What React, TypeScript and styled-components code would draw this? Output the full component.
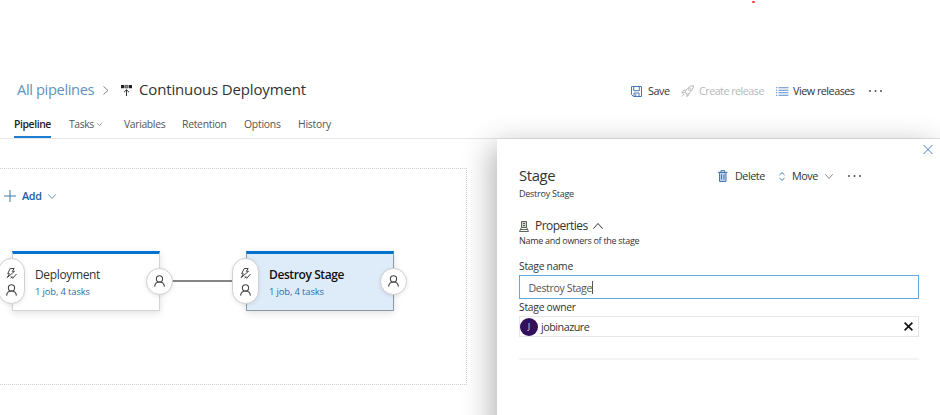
import React from "react";
import styled, { createGlobalStyle } from "styled-components";

const GlobalStyle = createGlobalStyle`
  * { box-sizing: border-box; }
  html, body { margin: 0; padding: 0; }
  body { background: #fff; overflow: hidden; font-family: "Open Sans", "Noto Sans", sans-serif; color: #333; }
`;

const Page = styled.div`
  position: relative;
  width: 940px;
  height: 415px;
  overflow: hidden;
  background: #fff;
`;

const RedMark = styled.i`
  position: absolute;
  left: 752px;
  top: 1px;
  width: 3px;
  height: 2px;
  border-radius: 1px;
  background: #ef4444;
`;

const Header = styled.header`
  display: flex;
  align-items: center;
  height: 30px;
  margin-top: 75px;
  padding-left: 17px;
`;

const Label = styled.span<{ $w: number; $size: number; $ls?: number; $color?: string; $weight?: number }>`
  flex: none;
  width: ${(p) => p.$w}px;
  font-size: ${(p) => p.$size}px;
  letter-spacing: ${(p) => p.$ls ?? 0}px;
  color: ${(p) => p.$color ?? "#333"};
  font-weight: ${(p) => p.$weight ?? 400};
  line-height: 20px;
  white-space: nowrap;
`;

const Title = styled(Label)`
  padding-bottom: 2px;
`;

const Icon = styled.svg<{ $ml?: number; $mr?: number }>`
  flex: none;
  display: block;
  overflow: visible;
  fill: none;
  stroke-linecap: butt;
  margin-left: ${(p) => p.$ml ?? 0}px;
  margin-right: ${(p) => p.$mr ?? 0}px;
`;

const HeaderActions = styled.div`
  display: flex;
  align-items: center;
  margin-left: 325px;
  padding-top: 2px;
`;

const Tabs = styled.nav`
  display: flex;
  height: 34px;
  padding-left: 14px;
  border-bottom: 1px solid #e6e6e6;
`;

const Tab = styled.a<{ $gap: number; $active?: boolean }>`
  display: flex;
  align-items: center;
  height: 33px;
  padding-top: 5px;
  margin-right: ${(p) => p.$gap}px;
  box-shadow: ${(p) => (p.$active ? "inset 0 -2px 0 #1b7cd3" : "none")};
`;

const Canvas = styled.main`
  width: 467px;
  height: 217px;
  margin-top: 29px;
  border: 1px dotted #d0d0d0;
  border-left: 0;
`;

const AddButton = styled.div`
  display: flex;
  align-items: center;
  height: 20px;
  margin: 17px 0 0 4px;
`;

const StageRow = styled.div`
  display: flex;
  align-items: flex-start;
  margin: 45px 0 0 12px;
`;

const StageCard = styled.article<{ $selected?: boolean }>`
  position: relative;
  width: 148px;
  height: 60px;
  padding: 12px 0 0 22px;
  border: 1px solid ${(p) => (p.$selected ? "#8d98a5" : "#d4d4d4")};
  border-top: 3px solid #0072d0;
  background: ${(p) => (p.$selected ? "#deebf9" : "#fff")};
  box-shadow: 0 2px 7px rgba(0, 0, 0, 0.13);
`;

const CardLine = styled.div`
  display: flex;
  height: 17px;
  align-items: center;
`;

const PreConditions = styled.div`
  position: absolute;
  left: -15px;
  top: 4px;
  width: 27px;
  height: 46px;
  border: 1px solid #d0d0d0;
  border-radius: 14px;
  background: #fff;
  display: flex;
  flex-direction: column;
  align-items: center;
  padding-top: 9px;
  gap: 5px;
  box-shadow: 0 1px 4px rgba(0, 0, 0, 0.1);
`;

const PostConditions = styled.div`
  position: absolute;
  right: -14px;
  top: 14px;
  width: 27px;
  height: 27px;
  border: 1px solid #d0d0d0;
  border-radius: 50%;
  background: #fff;
  display: flex;
  align-items: center;
  justify-content: center;
  padding-bottom: 1px;
  box-shadow: 0 1px 4px rgba(0, 0, 0, 0.1);
`;

const Connector = styled.div`
  width: 86px;
  height: 2px;
  margin-top: 29px;
  background: #858585;
`;

const Panel = styled.aside`
  position: absolute;
  left: 497px;
  top: 139px;
  width: 443px;
  height: 300px;
  padding: 0 22px;
  background: #fff;
  box-shadow: -5px 7px 28px rgba(0, 0, 0, 0.3);
`;

const PanelClose = styled.div`
  display: flex;
  justify-content: flex-end;
  height: 27px;
  padding-top: 6px;
  margin-right: -15px;
`;

const PanelRow = styled.div<{ $h: number; $mt?: number }>`
  display: flex;
  align-items: center;
  height: ${(p) => p.$h}px;
  margin-top: ${(p) => p.$mt ?? 0}px;
`;

const Field = styled.div`
  display: flex;
  align-items: center;
  width: 400px;
  height: 24px;
  padding: 1px 0 0 8.5px;
  border: 1px solid #61aae0;
`;

const Caret = styled.i`
  width: 1px;
  height: 13px;
  background: #555;
`;

const OwnerBox = styled.div`
  display: flex;
  align-items: center;
  width: 400px;
  height: 21px;
  margin-top: 1px;
  border: 1px solid #e6e6e6;
`;

const Avatar = styled.span`
  display: flex;
  align-items: center;
  justify-content: center;
  width: 18px;
  height: 18px;
  margin-right: 3px;
  border-radius: 50%;
  background: #32105c;
  color: #ddd;
  font-size: 9px;
`;

const Divider = styled.div`
  width: 400px;
  height: 2px;
  margin-top: 21px;
  background: #f5f5f5;
`;

const DotIcon = styled(Icon)`
  fill: #444;
`;

type ChevronProps = { w: number; h: number; color: string; ml?: number; mr?: number; up?: boolean };

const Chevron = ({ w, h, color, ml, mr, up }: ChevronProps) => (
  <Icon $ml={ml} $mr={mr} width={w} height={h} stroke={color}>
    <path d={up ? `M.3 ${h - 0.3}L${w / 2} .5 ${w - 0.3} ${h - 0.3}` : `M.3 .3L${w / 2} ${h - 0.5} ${w - 0.3} .3`} />
  </Icon>
);

const Dots = ({ ml, mb }: { ml?: number; mb?: number }) => (
  <DotIcon $ml={ml} width="13" height={2 + (mb ?? 0)}>
    <circle cx="1" cy="1" r=".95" />
    <circle cx="6.5" cy="1" r=".95" />
    <circle cx="12" cy="1" r=".95" />
  </DotIcon>
);

const Person = () => (
  <Icon width="11" height="12" stroke="#444" strokeWidth="1.1">
    <circle cx="5.5" cy="3.9" r="3.1" />
    <path d="M.6 11.6C.9 8.7 2.8 7 5.5 7s4.600 1.700 4.900 4.600" />
  </Icon>
);

const Trigger = () => (
  <Icon width="11" height="11" stroke="#444" strokeWidth="1">
    <path d="M4.200.5h4L6.300 3.300h2.200L1.200 9.600 3.400 5.700H1.700zM4.500 10.400l1.800-1.800M5 8.300l1.700 2L10.500 6" />
  </Icon>
);

const Stage = ({ name, selected }: { name: string; selected?: boolean }) => (
  <StageCard $selected={selected}>
    <CardLine>
      <Label $w={80} $size={12} $ls={selected ? -0.4 : -0.35} $weight={selected ? 600 : 400} $color={selected ? "#111" : "#333"}>
        {name}
      </Label>
    </CardLine>
    <CardLine>
      <Label $w={60} $size={9.4} $ls={-0.12} $color="#2b6ca8">1 job, 4 tasks</Label>
    </CardLine>
    <PreConditions>
      <Trigger />
      <Person />
    </PreConditions>
    <PostConditions>
      <Person />
    </PostConditions>
  </StageCard>
);

export default function App() {
  return (
    <Page>
      <GlobalStyle />
      <RedMark />
      <Header>
        <Title $w={77} $size={14.7} $ls={-0.38} $color="#5f93bf">All pipelines</Title>
        <Icon $ml={9} $mr={12} width="6" height="9" stroke="#888">
          <path d="M.5.5l4.500 4L.5 8.500" />
        </Icon>
        <Icon $mr={7} width="11" height="11">
          <path fill="#222" d="M0 0h3.300v3.300H0zM7.800 0H11v3.300H7.800z" />
          <path fill="#999" stroke="#333" strokeWidth=".7" d="M4.100.4h2.800v2.500H4.100z" />
          <path stroke="#333" d="M5.500 11V4.900M3 7.200l2.500-2.400L8 7.200" />
        </Icon>
        <Title $w={167} $size={15} $ls={-0.15}>Continuous Deployment</Title>
        <HeaderActions>
          <Icon $mr={6} width="11" height="11" stroke="#4678b5">
            <path d="M.5.5h10v10h-8l-2-2zM2.700.5v4.200h5.600V.5M3 10.500V7h5v3.500M4.800 8.200v2.300" />
          </Icon>
          <Label $w={33} $size={10.8} $ls={-0.4}>Save</Label>
          <Icon $mr={5} width="13" height="12" stroke="#b9b9b9">
            <path d="M4 7.500C5.500 3.800 8.200.9 12.400.6c0 4-2.700 6.900-6.200 8.600zM4.500 5.200H2.600L.8 8l3-.5M6.200 9l-.5 2.500L8 9.800V8M3.400 8.800L.8 11.400" />
            <circle cx="8.700" cy="4.300" r="1.300" />
          </Icon>
          <Label $w={77} $size={10.8} $ls={-0.54} $color="#b8b8b8">Create release</Label>
          <Icon $mr={4.500} width="12.500" height="9" stroke="#5b8ccb" strokeWidth="1.100">
            <path d="M0 .8h1.300M0 3.300h1.300M0 5.800h1.300M0 8.300h1.300M2.500.8h10M2.500 3.300h10M2.500 5.800h10M2.500 8.300h10" />
          </Icon>
          <Label $w={62} $size={10.8} $ls={-0.5}>View releases</Label>
          <Dots ml={14} />
        </HeaderActions>
      </Header>

      <Tabs>
        <Tab $gap={18} $active>
          <Label $w={37} $size={10.400} $ls={-0.4} $weight={600} $color="#222">Pipeline</Label>
        </Tab>
        <Tab $gap={22}>
          <Label $w={28} $size={10.400} $ls={-0.4} $color="#555">Tasks</Label>
          <Chevron w={5} h={3} color="#999" />
        </Tab>
        <Tab $gap={17}><Label $w={41} $size={10.400} $ls={-0.35} $color="#555">Variables</Label></Tab>
        <Tab $gap={17}><Label $w={45} $size={10.400} $ls={-0.28} $color="#555">Retention</Label></Tab>
        <Tab $gap={17}><Label $w={37} $size={10.400} $ls={-0.25} $color="#555">Options</Label></Tab>
        <Tab $gap={0}><Label $w={34} $size={10.400} $ls={-0.25} $color="#555">History</Label></Tab>
      </Tabs>

      <Canvas>
        <AddButton>
          <Icon $mr={6} width="12" height="12" stroke="#3f7dac">
            <path d="M6 0v12M0 6h12" />
          </Icon>
          <Label $w={26} $size={10.800} $ls={-0.3} $weight={600} $color="#1a609c">Add</Label>
          <Chevron w={8} h={5} color="#6f9fc4" />
        </AddButton>
        <StageRow>
          <Stage name="Deployment" />
          <Connector />
          <Stage name="Destroy Stage" selected />
        </StageRow>
      </Canvas>

      <Panel>
        <PanelClose>
          <Icon width="10" height="9" stroke="#4480c2">
            <path d="M.5 0l9 9M9.500 0l-9 9" />
          </Icon>
        </PanelClose>
        <PanelRow $h={20}>
          <Title $w={199} $size={14.800} $ls={-0.35}>Stage</Title>
          <Icon $mr={7.500} width="9.500" height="12" stroke="#4678b5">
            <path fill="#bcd0e8" d="M1.500 2.500h6.500v9H1.500z" />
            <path d="M0 2.300h9.500M3 2V.6h3.500V2M3.500 4.500v5M6 4.500v5" />
          </Icon>
          <Label $w={44} $size={10.800} $ls={-0.47}>Delete</Label>
          <Icon $mr={7} width="6" height="9" stroke="#3d7cc4">
            <path d="M.4 3L3 .6 5.600 3M.4 6L3 8.400 5.600 6" />
          </Icon>
          <Label $w={33} $size={10.800} $ls={-0.45}>Move</Label>
          <Chevron w={8} h={5} color="#888" />
          <Dots ml={15} />
        </PanelRow>
        <PanelRow $h={18} $mt={-1}><Label $w={60} $size={9} $ls={-0.25}>Destroy Stage</Label></PanelRow>
        <PanelRow $h={18} $mt={14}>
          <Icon $mr={6} width="10" height="11" stroke="#4b5548" strokeWidth=".9">
            <path fill="#cbd5c7" d="M2.500.5h5v6h-5z" />
            <path d="M4 2.500h2M4 4.500h2M2.300 6.500L.5 10.500h9L7.700 6.500M1.500 8.500h7" />
          </Icon>
          <Label $w={58} $size={12} $ls={-0.54}>Properties</Label>
          <Chevron w={10} h={6} color="#333" up />
        </PanelRow>
        <PanelRow $h={14} $mt={-1}><Label $w={130} $size={9} $ls={-0.29}>Name and owners of the stage</Label></PanelRow>
        <PanelRow $h={18} $mt={9}><Label $w={60} $size={10.300} $ls={-0.25}>Stage name</Label></PanelRow>
        <Field>
          <Label $w={63.500} $size={10.600} $ls={-0.37} $color="#555">Destroy Stage</Label>
          <Caret />
        </Field>
        <PanelRow $h={16}><Label $w={60} $size={10.300} $ls={-0.25}>Stage owner</Label></PanelRow>
        <OwnerBox>
          <Avatar>J</Avatar>
          <Label $w={362.500} $size={10.800} $ls={-0.5}>jobinazure</Label>
          <Icon width="9" height="9" stroke="#111" strokeWidth="1.600">
            <path d="M.6.6l7.800 7.800M8.400.6L.6 8.400" />
          </Icon>
        </OwnerBox>
        <Divider />
      </Panel>
    </Page>
  );
}
